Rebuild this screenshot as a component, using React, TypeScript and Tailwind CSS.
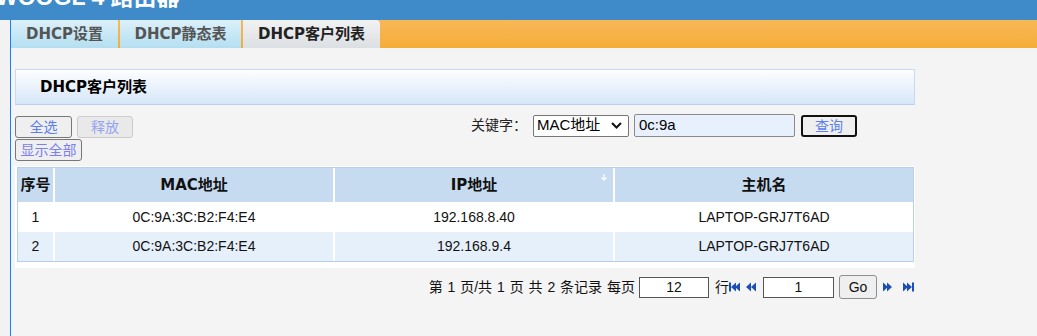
import React from "react";

const bold = "font-['DejaVu_Sans','Noto_Sans_CJK_SC',sans-serif] font-bold";
const body = "font-['Liberation_Sans','Noto_Sans_CJK_SC',sans-serif]";

const tabs = [
  { label: "DHCP设置", w: "w-[107px]", active: false },
  { label: "DHCP静态表", w: "w-[121px]", active: false },
  { label: "DHCP客户列表", w: "w-[137px]", active: true },
];

const rows = [
  { id: 1, mac: "0C:9A:3C:B2:F4:E4", ip: "192.168.8.40", host: "LAPTOP-GRJ7T6AD" },
  { id: 2, mac: "0C:9A:3C:B2:F4:E4", ip: "192.168.9.4", host: "LAPTOP-GRJ7T6AD" },
];

function PageIcon({ dir, bar }: { dir: "left" | "right"; bar?: boolean }) {
  const left = dir === "left";
  return (
    <svg width="12" height="10" viewBox="0 0 12 10" className="shrink-0">
      {left ? (
        <g fill="#1d4fb3">
          {bar && <rect x="0" y="0.5" width="2" height="9" />}
          <polygon points={bar ? "2,5 7,0.5 7,9.5" : "0,5 5,0.5 5,9.5"} />
          <polygon points={bar ? "6,5 11,0.5 11,9.5" : "5,5 10,0.5 10,9.5"} />
        </g>
      ) : (
        <g fill="#1d4fb3">
          <polygon points="0,0.5 5,5 0,9.5" />
          <polygon points="4,0.5 9,5 4,9.5" />
          {bar && <rect x="9" y="0.5" width="2" height="9" />}
        </g>
      )}
    </svg>
  );
}

export default function App() {
  return (
    <div className={`w-[1037px] h-[336px] overflow-hidden bg-[#f4f4f4] ${body}`}>
      {/* top title bar (text cut off by the viewport, as in the page) */}
      <div className="h-[20px] bg-[#3f8ac9] overflow-hidden">
        <div className="-mt-[16px] -ml-[4px] text-white font-bold text-[23px] leading-[26px] whitespace-nowrap font-['Liberation_Sans','Noto_Sans_CJK_SC',sans-serif]">
          WOOGL 4 路由器
        </div>
      </div>

      <div className="flex h-[316px]">
        <div className="w-[10px] bg-[#f2f2f2]" />
        <div className="w-px bg-[#1a7cff]" />
        <div className="flex-1">
          {/* tabs */}
          <div className="h-[28px] flex gap-[2px] bg-gradient-to-b from-[#f8b857] to-[#f6ad36]">
            {tabs.map((t) => (
              <div
                key={t.label}
                className={`${t.w} h-full flex items-center justify-center text-[15px] ${bold} ${
                  t.active
                    ? "bg-gradient-to-b from-[#f1f2f3] to-[#dcdfe3] text-[#222] rounded-tr-[4px]"
                    : "bg-gradient-to-b from-[#dcf0f9] to-[#b3dff1] text-[#555]"
                }`}
              >
                {t.label}
              </div>
            ))}
          </div>

          <div className="px-[4px] pt-[21px] w-[908px]">
            {/* panel header */}
            <div className="h-[36px] w-[900px] border border-[#c6daf1] border-b-[#b9d2ef] bg-gradient-to-b from-[#fdfeff] to-[#d6e6f8] pl-[24px] flex items-center">
              <span className={`text-[15px] text-black ${bold}`}>DHCP客户列表</span>
            </div>

            {/* toolbar */}
            <div className="mt-[11px] flex justify-between items-start">
              <div className="w-[140px] flex flex-wrap gap-x-[5px] gap-y-[1px] text-[14px]">
                <button className="w-[57px] h-[22px] border border-[#777] rounded-[3px] bg-[#efefef] text-[#5b80ec] leading-none">
                  全选
                </button>
                <button className="w-[56px] h-[22px] border border-[#cbcbcb] rounded-[3px] bg-[#e9e9e9] text-[#93a4f2] leading-none">
                  释放
                </button>
                <button className="w-[67px] h-[22px] border border-[#777] rounded-[3px] bg-[#efefef] text-[#7a7ff2] leading-none">
                  显示全部
                </button>
              </div>
              <div className="flex items-center mr-[58px] -mt-[2px] text-[14px] text-[#222]">
                <span>关键字：</span>
                <div className="ml-[6px] w-[96px] h-[22px] border border-[#767676] rounded-[2px] bg-white flex items-center justify-between pl-[3px] pr-[6px] text-black text-[15px]">
                  <span>MAC地址</span>
                  <svg width="11" height="7" viewBox="0 0 11 7">
                    <polyline points="1,1 5.5,5.5 10,1" fill="none" stroke="#111" strokeWidth="2" />
                  </svg>
                </div>
                <div className="ml-[5px] w-[161px] h-[23px] border border-[#8a8a8a] rounded-[2px] bg-[#e8f0fe] flex items-center pl-[4px] text-black text-[15px]">
                  0c:9a
                </div>
                <button className="ml-[6px] w-[56px] h-[22px] border-2 border-[#111] rounded-[3px] bg-[#efefef] text-[#5b80ec] leading-none">
                  查询
                </button>
              </div>
            </div>

            {/* table */}
            <div className="mt-[5px] bg-white pl-[2px] pr-[1px] pt-px pb-[6px]">
              <div className="border border-[#b7cfed]">
                <div className={`grid grid-cols-[35px_280px_280px_1fr] h-[34px] bg-[#c6dbef] text-[15px] text-[#111] ${bold}`}>
                  <div className="flex items-center justify-center">序号</div>
                  <div className="flex items-center justify-center border-l-2 border-white">MAC地址</div>
                  <div className="relative flex items-center justify-center border-l-2 border-white">
                    IP地址
                    <svg width="6" height="7" viewBox="0 0 6 7" className="absolute right-[6px] top-[6px]">
                      <path d="M3 0v5M0.5 3.5L3 6l2.5-2.5" stroke="#fff" strokeWidth="1.2" fill="none" />
                    </svg>
                  </div>
                  <div className="flex items-center justify-center border-l-2 border-white">主机名</div>
                </div>
                {rows.map((r, i) => (
                  <div
                    key={r.id}
                    className={`grid grid-cols-[35px_280px_280px_1fr] text-[14px] text-[#111] ${
                      i % 2 ? "bg-[#e6f0fb] h-[29px]" : "bg-white h-[30px]"
                    }`}
                  >
                    <div className="flex items-center justify-center">{r.id}</div>
                    <div className="flex items-center justify-center border-l-2 border-white">{r.mac}</div>
                    <div className="flex items-center justify-center border-l-2 border-white">{r.ip}</div>
                    <div className="flex items-center justify-center border-l-2 border-white">{r.host}</div>
                  </div>
                ))}
              </div>
            </div>

            {/* pagination */}
            <div className="mt-[7px] flex justify-end items-center text-[14px] text-[#111]">
              <span className="whitespace-pre [word-spacing:1px]">第 1 页/共 1 页 共 2 条记录 每页</span>
              <div className="ml-[4px] w-[70px] h-[21px] border border-[#555] bg-white flex items-center justify-center">
                12
              </div>
              <span className="ml-[6px]">行</span>
              <PageIcon dir="left" bar />
              <span className="ml-[5px]">
                <PageIcon dir="left" />
              </span>
              <div className="ml-[5px] w-[71px] h-[21px] border border-[#555] bg-white flex items-center justify-center">
                1
              </div>
              <button className="ml-[5px] w-[38px] h-[24px] border border-[#8f8f8f] rounded-[3px] bg-[#efefef] leading-none">
                Go
              </button>
              <span className="ml-[6px]">
                <PageIcon dir="right" />
              </span>
              <span className="ml-[8px]">
                <PageIcon dir="right" bar />
              </span>
            </div>
          </div>
        </div>
      </div>
    </div>
  );
}
